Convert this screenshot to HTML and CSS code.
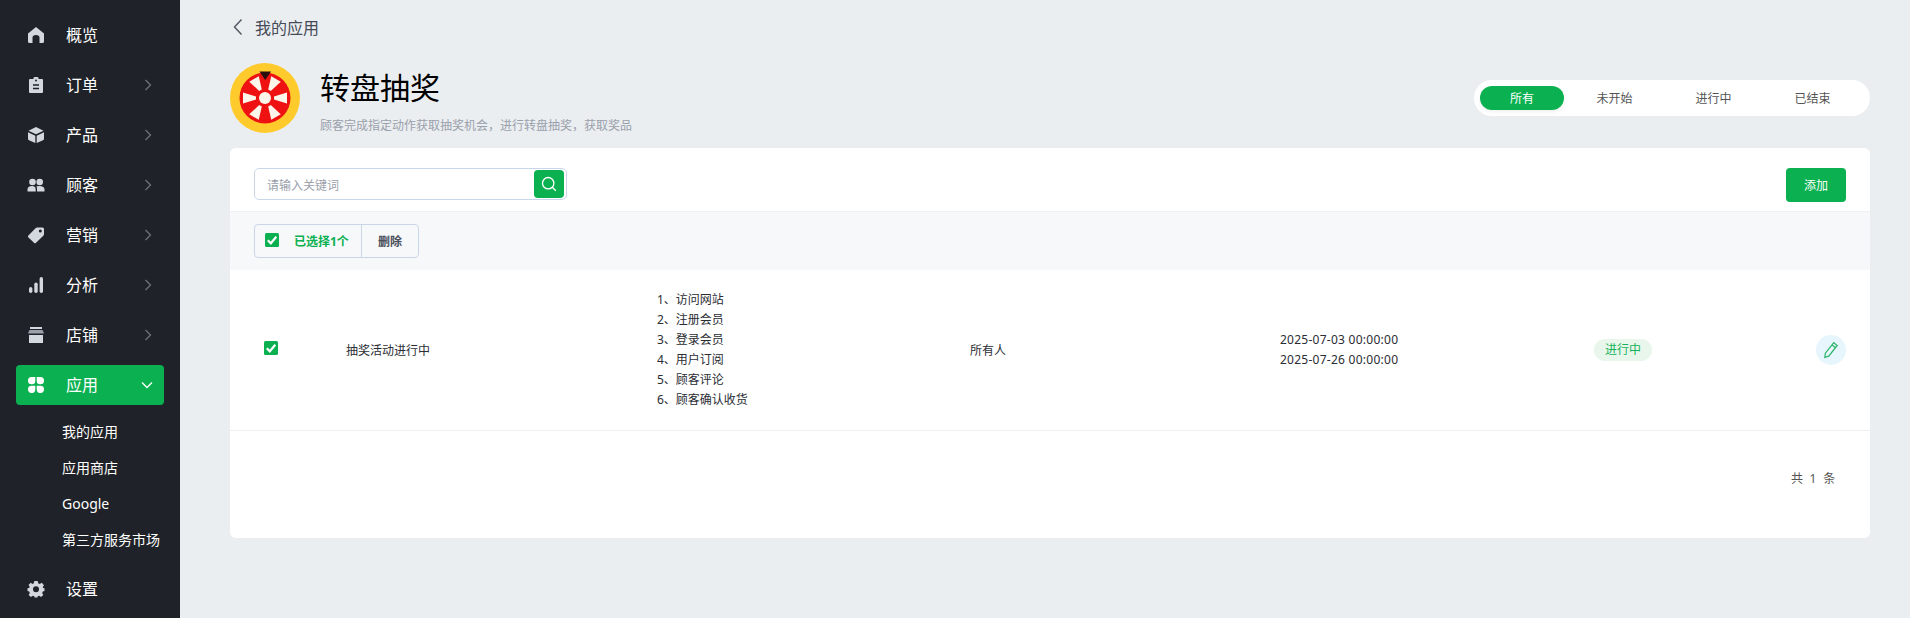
FILE: index.html
```html
<!DOCTYPE html>
<html lang="zh-CN">
<head>
<meta charset="utf-8">
<title>转盘抽奖</title>
<link rel="stylesheet" href="styles.css">
</head>
<body>
<aside class="sidebar">
  <nav class="nav">
    <a class="nav-item"><svg class="nav-icon" viewBox="0 0 18 18"><path d="M9 1 L17 7.500 V15.500 Q17 17 15.500 17 H12.500 V11.500 Q12.500 9 9 9 Q5.500 9 5.500 11.500 V17 H2.500 Q1 17 1 15.500 V7.500 Z" fill="#d3d7de"/></svg><span class="nav-label">概览</span></a>
    <a class="nav-item"><svg class="nav-icon" viewBox="0 0 18 18"><path d="M3 3 H6.500 V2 Q6.500 1 8 1 H10 Q11.500 1 11.500 2 V3 H15 Q16 3 16 4 V16 Q16 17 15 17 H3 Q2 17 2 16 V4 Q2 3 3 3 Z" fill="#d3d7de"/><path d="M6 9 H12 M6 12.500 H12" stroke="#1f2228" stroke-width="1.300"/><circle cx="9" cy="4.500" r="1" fill="#1f2228"/></svg><span class="nav-label">订单</span><svg class="nav-chev" viewBox="0 0 8 12"><path d="M1.500 1 L6.500 6 L1.500 11" fill="none" stroke="#6d7178" stroke-width="1.300"/></svg></a>
    <a class="nav-item"><svg class="nav-icon" viewBox="0 0 18 18"><path d="M9 1 L16.500 4.700 L9 8.300 L1.500 4.700 Z" fill="#d3d7de"/><path d="M1 6.300 L8.300 9.800 V17 L2 14.200 Q1 13.700 1 12.700 Z M17 6.300 L9.700 9.800 V17 L16 14.200 Q17 13.700 17 12.700 Z" fill="#d3d7de"/></svg><span class="nav-label">产品</span><svg class="nav-chev" viewBox="0 0 8 12"><path d="M1.500 1 L6.500 6 L1.500 11" fill="none" stroke="#6d7178" stroke-width="1.300"/></svg></a>
    <a class="nav-item"><svg class="nav-icon" viewBox="0 0 18 18"><circle cx="5.500" cy="6" r="3.300" fill="#d3d7de"/><circle cx="12.700" cy="6" r="3.300" fill="#d3d7de"/><path d="M0.500 15.500 V13.500 Q0.500 10 5 10 Q8.500 10 8.700 13 V15.500 Z M10 15.500 V12.500 Q10 11 9.300 10.300 Q10.500 10 12.500 10 Q17.500 10 17.500 13.500 V15.500 Z" fill="#d3d7de"/></svg><span class="nav-label">顾客</span><svg class="nav-chev" viewBox="0 0 8 12"><path d="M1.500 1 L6.500 6 L1.500 11" fill="none" stroke="#6d7178" stroke-width="1.300"/></svg></a>
    <a class="nav-item"><svg class="nav-icon" viewBox="0 0 18 18"><path d="M1.200 9.800 L8.500 2.200 Q9.200 1.500 10.200 1.500 H15.500 Q17 1.500 17 3 V8 Q17 9 16.300 9.700 L8.800 17 Q8 17.700 7.200 17 L1.200 11.300 Q0.500 10.500 1.200 9.800 Z" fill="#d3d7de"/><circle cx="13.300" cy="5" r="1.500" fill="#1f2228"/></svg><span class="nav-label">营销</span><svg class="nav-chev" viewBox="0 0 8 12"><path d="M1.500 1 L6.500 6 L1.500 11" fill="none" stroke="#6d7178" stroke-width="1.300"/></svg></a>
    <a class="nav-item"><svg class="nav-icon" viewBox="0 0 18 18"><rect x="2" y="11" width="3.400" height="6" rx="1.700" fill="#d3d7de"/><rect x="7.300" y="6.500" width="3.400" height="10.500" rx="1.700" fill="#d3d7de"/><rect x="12.600" y="1" width="3.400" height="16" rx="1.700" fill="#d3d7de"/></svg><span class="nav-label">分析</span><svg class="nav-chev" viewBox="0 0 8 12"><path d="M1.500 1 L6.500 6 L1.500 11" fill="none" stroke="#6d7178" stroke-width="1.300"/></svg></a>
    <a class="nav-item"><svg class="nav-icon" viewBox="0 0 18 18"><path d="M3 1 H15 V3 H3 Z" fill="#d3d7de"/><path d="M2.500 4 H15.500 L17 7.500 H1 Z" fill="#9ca1a9"/><path d="M2 9 H16 V17 H2 Z" fill="#d3d7de"/></svg><span class="nav-label">店铺</span><svg class="nav-chev" viewBox="0 0 8 12"><path d="M1.500 1 L6.500 6 L1.500 11" fill="none" stroke="#6d7178" stroke-width="1.300"/></svg></a>
    <a class="nav-item nav-active"><svg class="nav-icon" viewBox="0 0 18 18"><path d="M4.500 1 H8.300 V5 Q8.300 8.300 5 8.300 H4.500 Q1 8.300 1 4.700 Q1 1 4.500 1 Z M13.500 1 Q17 1 17 4.700 Q17 8.300 13.500 8.300 H13 Q9.700 8.300 9.700 5 V1 Z M4.500 17 Q1 17 1 13.300 Q1 9.700 4.500 9.700 H8.300 V13 Q8.300 17 5 17 Z M13.500 17 H13 Q9.700 17 9.700 13 V9.700 H13.500 Q17 9.700 17 13.300 Q17 17 13.500 17 Z" fill="#fff"/></svg><span class="nav-label">应用</span><svg class="nav-chev-down" viewBox="0 0 12 8"><path d="M1 1.500 L6 6.500 L11 1.500" fill="none" stroke="#fff" stroke-width="1.300"/></svg></a>
    <div class="subnav">
      <a class="subnav-item">我的应用</a>
      <a class="subnav-item">应用商店</a>
      <a class="subnav-item">Google</a>
      <a class="subnav-item">第三方服务市场</a>
    </div>
    <a class="nav-item nav-settings"><svg class="nav-icon" viewBox="0 0 18 18"><path fill-rule="evenodd" d="M7.300 1 H10.700 L11.200 3.300 L12.800 4 L14.800 2.800 L17 5.200 L15.700 7.100 L16.200 8 L17.500 8.300 V11 L15.800 11.500 L15.200 13 L16.300 15 L14 17 L12.100 15.700 L10.800 16.200 L10.300 17.500 H7.700 L7.200 16.200 L5.800 15.700 L3.900 17 L1.700 15 L2.800 13 L2.200 11.500 L0.500 11 V8.300 L2.200 8 L2.700 6.800 L1.500 5 L3.700 2.800 L5.500 4 L6.800 3.300 Z M9 6.300 A3 3 0 1 0 9 12.300 A3 3 0 1 0 9 6.300 Z" fill="#d3d7de"/></svg><span class="nav-label">设置</span></a>
  </nav>
</aside>
<main class="main">
  <div class="crumb">
    <svg class="crumb-back" viewBox="0 0 10 18"><path d="M8.500 1.500 L1.500 9 L8.500 16.500" fill="none" stroke="#555b66" stroke-width="1.500"/></svg>
    <span>我的应用</span>
  </div>
  <header class="head">
    <svg class="logo" viewBox="0 0 70 70">
      <circle cx="35" cy="35" r="35" fill="#ffca2c"/>
      <circle cx="35" cy="35" r="25.500" fill="#ee1212"/>
      <g fill="#fdf6ea">
        <path d="M44 33.500 L57 29.500 V40.500 L44 36.500 Z"/>
        <path d="M44 33.500 L57 29.500 V40.500 L44 36.500 Z" transform="rotate(60 35 35)"/>
        <path d="M44 33.500 L57 29.500 V40.500 L44 36.500 Z" transform="rotate(120 35 35)"/>
        <path d="M44 33.500 L57 29.500 V40.500 L44 36.500 Z" transform="rotate(180 35 35)"/>
        <path d="M44 33.500 L57 29.500 V40.500 L44 36.500 Z" transform="rotate(240 35 35)"/>
        <path d="M44 33.500 L57 29.500 V40.500 L44 36.500 Z" transform="rotate(300 35 35)"/>
      </g>
      <circle cx="35" cy="35" r="6" fill="#fdf6ea"/>
      <path d="M29.500 8.500 H41 L35.200 17 Z" fill="#2a0d0d"/>
    </svg>
    <div class="head-text">
      <h1 class="title">转盘抽奖</h1>
      <p class="desc">顾客完成指定动作获取抽奖机会，进行转盘抽奖，获取奖品</p>
    </div>
    <div class="tabs">
      <a class="tab tab-active">所有</a>
      <a class="tab">未开始</a>
      <a class="tab">进行中</a>
      <a class="tab">已结束</a>
    </div>
  </header>
  <section class="card">
    <div class="search-row">
      <div class="search">
        <span class="search-hint">请输入关键词</span>
        <span class="search-btn"><svg viewBox="0 0 16 16" class="search-icon"><circle cx="7.200" cy="7.200" r="5.700" fill="none" stroke="#fff" stroke-width="1.300"/><path d="M11.300 11.300 L14.800 14.800" stroke="#fff" stroke-width="1.300"/></svg></span>
      </div>
      <button class="add-btn">添加</button>
    </div>
    <div class="bulk-row">
      <div class="bulk">
        <div class="bulk-sel">
          <svg class="check check-bulk" viewBox="0 0 14 14"><rect width="14" height="14" rx="1.500" fill="#0bb150"/><path d="M2.800 7.300 L5.800 10.300 L11.300 3.800" fill="none" stroke="#fff" stroke-width="2.200"/></svg>
          <span class="bulk-text">已选择1个</span>
        </div>
        <div class="bulk-del">删除</div>
      </div>
    </div>
    <div class="row">
      <div class="cell cell-check"><svg class="check" viewBox="0 0 14 14"><rect width="14" height="14" rx="1.500" fill="#0bb150"/><path d="M2.800 7.300 L5.800 10.300 L11.300 3.800" fill="none" stroke="#fff" stroke-width="2.200"/></svg></div>
      <div class="cell">抽奖活动进行中</div>
      <div class="cell cell-lines">
        <div>1、访问网站</div>
        <div>2、注册会员</div>
        <div>3、登录会员</div>
        <div>4、用户订阅</div>
        <div>5、顾客评论</div>
        <div>6、顾客确认收货</div>
      </div>
      <div class="cell">所有人</div>
      <div class="cell cell-lines cell-dates">
        <div>2025-07-03 00:00:00</div>
        <div>2025-07-26 00:00:00</div>
      </div>
      <div class="cell"><span class="status">进行中</span></div>
      <div class="cell cell-edit"><span class="edit-btn"><svg class="edit-icon" viewBox="0 0 14 16"><path d="M9.500 1.500 L12.500 4 L5 13.500 L1.500 14.500 L2 10.800 Z M8 3.500 L11 6" fill="none" stroke="#2fb56a" stroke-width="1.100"/></svg></span></div>
    </div>
    <div class="pager">共 1 条</div>
  </section>
</main>
</body>
</html>
```
FILE: styles.css
```css
* { box-sizing: border-box; }
html, body { margin: 0; padding: 0; height: 100%; }
body {
  display: flex;
  height: 618px;
  overflow: hidden;
  background: #ebeef1;
  font-family: "Noto Sans", "Noto Sans CJK SC", "Liberation Sans", sans-serif;
  color: #333;
}
.sidebar { width: 180px; flex: none; background: #1f2228; color: #fff; }
.nav { padding-top: 10px; display: flex; flex-direction: column; }
.nav-item {
  height: 50px; display: flex; align-items: center; padding-left: 27px; padding-right: 28px; font-size: 16px; color: #fff;
}
.nav-icon { width: 18px; height: 18px; flex: none; }
.nav-label { margin-left: 21px; flex: 1; line-height: 1; padding-bottom: 1px; }
.nav-chev { width: 8px; height: 12px; flex: none; }
.nav-active {
  height: 40px; margin: 5px 16px; padding-left: 11px; padding-right: 11px; background: #0bb150; border-radius: 4px;
}
.nav-chev-down { width: 12px; height: 8px; flex: none; }
.subnav { display: flex; flex-direction: column; padding-top: 4px; }
.subnav-item { height: 36px; line-height: 36px; padding-left: 62px; font-size: 14px; color: #fff; }
.nav-settings { margin-top: 6px; }
.main { flex: 1; min-width: 0; padding: 0 40px 0 50px; }
.crumb { height: 54px; display: flex; align-items: center; gap: 12px; font-size: 16px; color: #454b56; padding-left: 3px; }
.crumb-back { width: 10px; height: 18px; }
.head { height: 94px; display: flex; align-items: flex-start; padding-top: 9px; }
.logo { width: 70px; height: 70px; flex: none; }
.head-text { margin-left: 20px; flex: 1; }
.title { margin: 0; font-size: 30px; line-height: 40px; font-weight: 400; color: #000; padding-top: 5px; }
.desc { margin: 9px 0 0; font-size: 12px; line-height: 18px; color: #9aa0ab; }
.tabs {
  margin-top: 17px; width: 396px; height: 36px; display: flex; align-items: center; padding-left: 6px; background: #fff; border-radius: 18px;
}
.tab { width: 99px; height: 24px; line-height: 26px; text-align: center; font-size: 12px; color: #555; }
.tab-active { width: 84px; margin-right: 1px; background: #0bb150; color: #fff; border-radius: 12px; box-shadow: 0 2px 4px rgba(0,0,0,.06); }
.card { background: #fff; border-radius: 6px; height: 390px; overflow: hidden; }
.search-row {
  height: 64px; display: flex; justify-content: space-between; align-items: flex-start; padding: 20px 24px; border-bottom: 1px solid #eef0f3;
}
.search {
  width: 313px; height: 32px; display: flex; align-items: center; justify-content: space-between; border: 1px solid #c9d6e8; border-radius: 5px; padding: 0 2px 0 12px; background: #fff;
}
.search-hint { font-size: 12px; color: #9aa0ab; padding-top: 1px; }
.search-btn { width: 30px; height: 28px; display: flex; align-items: center; justify-content: center; background: #0bb150; border-radius: 4px; }
.search-icon { width: 16px; height: 16px; }
.add-btn {
  width: 60px; height: 34px; border: 0; border-radius: 4px; background: #0bb150; color: #fff; font: inherit; font-size: 12px; padding: 0;
}
.bulk-row { height: 58px; background: #f7f8fa; padding: 12px 24px; }
.bulk { width: 165px; height: 34px; display: flex; border: 1px solid #c9d6e8; border-radius: 4px; }
.bulk-sel { width: 107px; display: flex; align-items: center; padding-left: 10px; border-right: 1px solid #c9d6e8; }
.check { width: 14px; height: 14px; display: block; }
.check-bulk { margin-top: -2px; }
.bulk-text { margin-left: 15px; font-size: 12px; font-weight: 700; color: #0bb150; }
.bulk-del { flex: 1; display: flex; align-items: center; justify-content: center; font-size: 12px; font-weight: 700; color: #4a505b; }
.row {
  height: 161px; display: grid; grid-template-columns: 116px 311px 313px 310px 314px 1fr auto; align-items: center; border-bottom: 1px solid #eef0f3; font-size: 12px; color: #2a2d33;
}
.cell-check { padding-left: 34px; padding-bottom: 5px; }
.cell-lines { line-height: 20px; }
.cell-dates { letter-spacing: .26px; }
.status { display: inline-block; width: 58px; height: 22px; line-height: 22px; text-align: center; background: #e8f6ec; color: #16b45a; border-radius: 11px; }
.cell-edit { display: flex; justify-content: flex-end; padding-right: 24px; }
.edit-btn { width: 30px; height: 30px; display: flex; align-items: center; justify-content: center; background: #e6f6fc; border-radius: 50%; }
.edit-icon { width: 16px; height: 18px; }
.pager { padding: 39px 33px 0 0; text-align: right; font-size: 12px; line-height: 18px; color: #555; letter-spacing: 1.8px; }
```
